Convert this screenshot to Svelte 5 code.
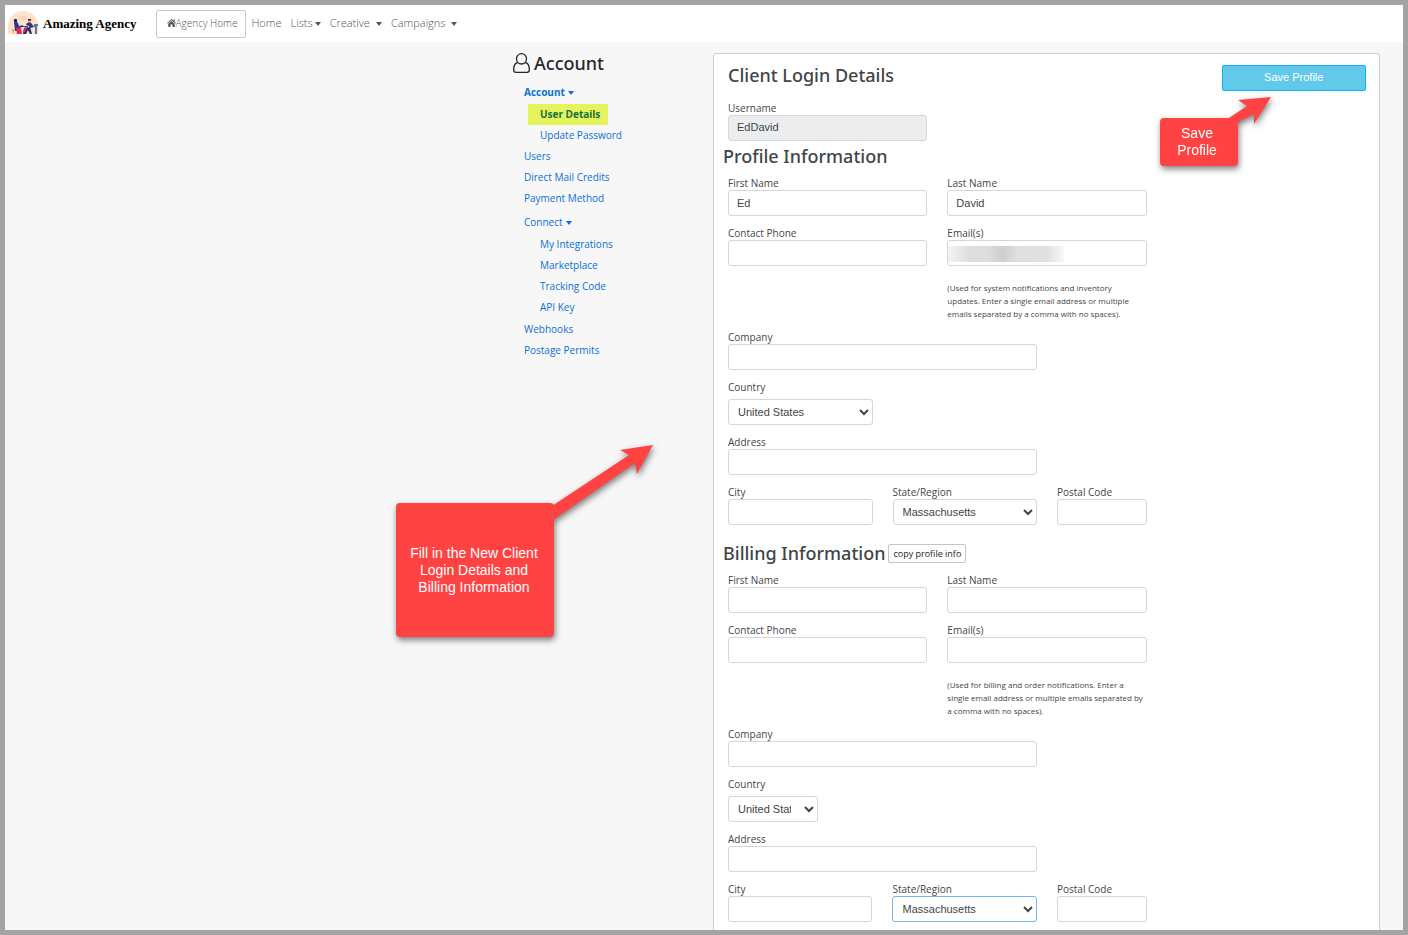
<script>
  const countries = ['United States', 'Canada'];
  const states = ['Massachusetts', 'New York', 'Vermont'];

  const sections = [
    {
      id: 'profile',
      title: 'Profile Information',
      first: 'Ed',
      last: 'David',
      hidden: true,
      note: '(Used for system notifications and inventory updates. Enter a single email address or multiple emails separated by a comma with no spaces).'
    },
    {
      id: 'billing',
      title: 'Billing Information',
      copy: true,
      first: '',
      last: '',
      narrowCountry: true,
      active: true,
      note: '(Used for billing and order notifications. Enter a single email address or multiple emails separated by a comma with no spaces).'
    }
  ];
</script>

<div class="frame">
  <header>
    <a class="brand" href="#home">
      <svg width="32" height="26" viewBox="0 0 32 26" aria-hidden="true">
        <path d="M1 23C-1 10 5 0 16 0s18 10 15 23z" fill="#fde3cb" />
        <path d="M12 5h8v4h-8zM22 8h4v3h-4z" fill="#fbd5b4" />
        <path d="M7 11l2-1 2 2 1 3 4-1v2l-4 1-1 3H8z" fill="#2b3a83" />
        <circle cx="8.500" cy="9.500" r="1.700" fill="#27205c" />
        <path d="M9 17h5l1 6h-5z" fill="#e5285d" />
        <path d="M13 15h8v1h-8z" fill="#38418e" />
        <path d="M20 12l3-1 2 2 2 3-4 1-1-2-3-1z" fill="#2c3578" />
        <circle cx="22.500" cy="10" r="1.500" fill="#efa073" />
        <path d="M21 8h3v1.500h-3z" fill="#27205c" />
        <path d="M17 17l6-1 2 7h-2l-2-4-2 4h-3z" fill="#252b68" />
        <path d="M18 16l2 1-2 4h-2z" fill="#e5285d" />
        <path d="M27 13h4v2h-1v8h-2v-7h-1z" fill="#4c78b7" />
        <path d="M5 18h2v5H6z" fill="#f2a65b" />
      </svg>
      <span>Amazing Agency</span>
    </a>
    <nav>
      <a class="agency" href="#agency">
        <svg width="9" height="8" viewBox="0 0 18 16" aria-hidden="true"><path d="M9 0l4 3.500V1h2.500v4.500L18 8l-1 1-8-6.500L1 9 0 8zM9 4l6.500 5.500V16H11v-5H7v5H2.500V9.500z" fill="currentColor" /></svg>Agency Home
      </a>
      <a href="#home">Home</a>
      <a href="#lists">Lists<i class="caret"></i></a>
      <a href="#creative">Creative <i class="caret wide"></i></a>
      <a href="#campaigns">Campaigns <i class="caret wide"></i></a>
    </nav>
  </header>

  <main>
    <aside>
      <h1>
        <svg width="17" height="20" viewBox="0 0 17 20" aria-hidden="true"><path d="M4.500 9.500C.500 10.500.700 15 .700 17c0 1.500 1 2.300 2.300 2.300h11c1.300 0 2.300-.8 2.300-2.300 0-2 .2-6.500-3.800-7.500M8.500.700a5 5 0 015 5c0 3-2.200 5.300-5 5.300s-5-2.300-5-5.300a5 5 0 015-5z" fill="none" stroke="currentColor" stroke-width="1.300" /></svg>
        Account
      </h1>
      <ul class="menu">
        <li>
          <a class="strong" href="#account">Account<i class="caret"></i></a>
          <ul>
            <li><a class="current" href="#details">User Details</a></li>
            <li><a href="#password">Update Password</a></li>
          </ul>
        </li>
        <li><a href="#users">Users</a></li>
        <li><a href="#credits">Direct Mail Credits</a></li>
        <li><a href="#payment">Payment Method</a></li>
        <li class="group">
          <a href="#connect">Connect<i class="caret"></i></a>
          <ul>
            <li><a href="#integrations">My Integrations</a></li>
            <li><a href="#marketplace">Marketplace</a></li>
            <li><a href="#tracking">Tracking Code</a></li>
            <li><a href="#api">API Key</a></li>
          </ul>
        </li>
        <li><a href="#webhooks">Webhooks</a></li>
        <li><a href="#permits">Postage Permits</a></li>
      </ul>
    </aside>

    <form class="card">
      <div class="grid top">
        <h2>Client Login Details</h2>
        <button type="button" class="save">Save Profile</button>
      </div>
      <div class="grid">
        <div class="field c4">
          <label for="username">Username</label>
          <input id="username" value="EdDavid" disabled />
        </div>
      </div>

      {#each sections as s}
        <section>
          <div class="heading">
            <h2>{s.title}</h2>
            {#if s.copy}<button type="button" class="copy">copy profile info</button>{/if}
          </div>
          <div class="grid">
            <div class="field c4">
              <label for="{s.id}-first">First Name</label>
              <input id="{s.id}-first" value={s.first} />
            </div>
            <div class="field c4">
              <label for="{s.id}-last">Last Name</label>
              <input id="{s.id}-last" value={s.last} />
            </div>
            <div class="field c4 start">
              <label for="{s.id}-phone">Contact Phone</label>
              <input id="{s.id}-phone" type="tel" />
            </div>
            <div class="field c4">
              <label for="{s.id}-email">Email(s)</label>
              <input id="{s.id}-email" class:masked={s.hidden} />
              <p>{s.note}</p>
            </div>
            <div class="field c6 start">
              <label for="{s.id}-company">Company</label>
              <input id="{s.id}-company" />
            </div>
            <div class="field country start {s.narrowCountry ? 'c2' : 'c3'}">
              <label for="{s.id}-country">Country</label>
              <select id="{s.id}-country">
                {#each countries as c}<option>{c}</option>{/each}
              </select>
            </div>
            <div class="field c6 start">
              <label for="{s.id}-address">Address</label>
              <input id="{s.id}-address" />
            </div>
            <div class="field c3 start">
              <label for="{s.id}-city">City</label>
              <input id="{s.id}-city" />
            </div>
            <div class="field c3">
              <label for="{s.id}-state">State/Region</label>
              <select id="{s.id}-state" class:active={s.active}>
                {#each states as c}<option>{c}</option>{/each}
              </select>
            </div>
            <div class="field c2">
              <label for="{s.id}-postal">Postal Code</label>
              <input id="{s.id}-postal" />
            </div>
          </div>
        </section>
      {/each}
    </form>

    <div class="callout fill">
      <svg width="110" height="90" viewBox="0 0 110 90" aria-hidden="true"><path d="M0 67L80 14 71 9 104 4 88 33 86 22 0 82z" fill="#ff4343" /></svg>
      <span>Fill in the New Client Login Details and Billing Information</span>
    </div>
    <div class="callout savetip">
      <svg width="60" height="44" viewBox="0 0 60 44" aria-hidden="true"><path d="M5 34L26 20 17 14 50 11 33 38 33 28 14 38z" fill="#ff4343" /></svg>
      <span>Save Profile</span>
    </div>
  </main>
</div>

<style>
  :global(body) {
    margin: 0;
  }
  .frame {
    box-sizing: border-box;
    min-height: 100vh;
    display: flex;
    flex-direction: column;
    border: 5px solid #a3a3a3;
    background: #f7f7f7;
    color: #3f4549;
    font: 10px/14px 'Open Sans', 'Noto Sans', sans-serif;
  }
  a {
    color: #0b70d6;
    text-decoration: none;
  }
  header {
    display: flex;
    align-items: center;
    gap: 19px;
    height: 37px;
    padding-left: 2px;
    background: #fff;
  }
  .brand {
    display: flex;
    align-items: center;
    gap: 4px;
    color: #000;
    font: bold 13px/20px 'Liberation Serif', serif;
  }
  nav {
    display: flex;
    align-items: center;
    gap: 9px;
  }
  nav a {
    display: flex;
    align-items: center;
    color: #555;
    font-size: 11px;
    font-weight: 300;
    line-height: 14px;
    padding-bottom: 2px;
  }
  nav .agency {
    box-sizing: border-box;
    height: 28px;
    margin-right: -4px;
    padding: 0 8px 2px 10px;
    border: 1px solid #c8c8c8;
    border-radius: 2px;
    font-size: 10px;
  }
  .caret {
    display: inline-block;
    margin-left: 3px;
    border: 3px solid transparent;
    border-top: 4px solid currentColor;
    border-bottom: 0;
    vertical-align: 1px;
  }
  nav .caret {
    margin: 2px 0 0 2px;
  }
  nav .wide {
    margin-left: 6px;
  }
  main {
    flex: 1;
    display: grid;
    grid-template-columns: 200px minmax(0, 667px);
    justify-content: end;
    position: relative;
    padding: 11px 23px 0 0;
  }
  h1,
  h2 {
    margin: 0;
    font-family: 'Noto Sans', 'Open Sans', sans-serif;
    font-size: 18px;
    line-height: 20px;
    font-weight: 500;
  }
  h1 {
    display: flex;
    align-items: center;
    gap: 4px;
    color: #24292d;
  }
  ul {
    margin: 0;
    padding: 0;
    list-style: none;
  }
  .menu {
    padding: 9px 0 0 11px;
  }
  .menu ul {
    padding: 1px 0 0 4px;
  }
  .menu .group ul {
    padding-bottom: 1px;
  }
  .menu ul a {
    padding: 0 8px 0 12px;
  }
  .menu a {
    display: block;
    width: max-content;
    line-height: 21px;
  }
  .group {
    margin-top: 3px;
  }
  .strong,
  .menu .current {
    font-weight: 700;
  }
  .menu .current {
    background: #e5f35c;
    color: #14733c;
  }
  .card {
    padding: 11px 13px 8px 14px;
    border: 1px solid #d0d0d0;
    border-bottom: 0;
    border-radius: 3px 3px 0 0;
    background: #fff;
  }
  .grid {
    display: grid;
    grid-template-columns: repeat(12, minmax(0, 1fr));
    gap: 10px 20px;
  }
  .top {
    margin-bottom: 10px;
  }
  .top h2 {
    grid-column: span 9;
  }
  .save {
    grid-column: span 3;
    height: 26px;
    padding: 0 0 2px;
    border: 1px solid #12b0ec;
    border-radius: 2px;
    background: #62c9ea;
    color: #fff;
    font: 11px 'Liberation Sans', sans-serif;
  }
  .heading {
    display: flex;
    align-items: center;
    gap: 3px;
    height: 30px;
    margin: 0 0 5px -5px;
  }
  section + section {
    margin-top: 13px;
  }
  .copy {
    height: 19px;
    padding: 0 4px;
    border: 1px solid #c4c4c4;
    border-radius: 2px;
    background: #fff;
    color: #212529;
    font: 9px 'Open Sans', sans-serif;
  }
  .field {
    display: flex;
    flex-direction: column;
  }
  .c2 {
    grid-column-end: span 2;
  }
  .c3 {
    grid-column-end: span 3;
  }
  .c4 {
    grid-column-end: span 4;
  }
  .c6 {
    grid-column-end: span 6;
  }
  .start {
    grid-column-start: 1;
  }
  input,
  select {
    box-sizing: border-box;
    width: 100%;
    height: 26px;
    padding: 0 8px;
    border: 1px solid #d4d6d8;
    border-radius: 3px;
    background-color: #fff;
    color: #3f4549;
    font: 11px 'Liberation Sans', sans-serif;
  }
  select {
    padding: 0 10px 0 5px;
  }
  .country label {
    margin-bottom: 5px;
  }
  input:disabled {
    padding-bottom: 2px;
    background: #ebedef;
  }
  .active {
    border-color: #74b5f5;
  }
  .masked {
    background: linear-gradient(90deg, #f4f4f4, #dedede 18%, #dcdcdc 35%, #cfcfd0 47%, #dedfe0 60%, #dfe0e1 85%, #f8f8f8) 0 5px / 116px 16px no-repeat #fff;
  }
  p {
    margin: 15px 0 0;
    padding-right: 2px;
    font-size: 8px;
    line-height: 13px;
  }
  .callout {
    position: absolute;
    box-sizing: border-box;
    display: flex;
    align-items: center;
    justify-content: center;
    border-radius: 4px;
    background: #ff4343;
    color: #fff;
    font: 14px/17px 'Liberation Sans', sans-serif;
    text-align: center;
    filter: drop-shadow(1px 3px 3px rgba(0, 0, 0, 0.5));
  }
  .callout svg {
    position: absolute;
  }
  .fill {
    top: 461px;
    right: 849px;
    width: 158px;
    height: 134px;
    padding: 0 12px 0 10px;
  }
  .fill svg {
    left: 153px;
    top: -62px;
  }
  .savetip {
    top: 76px;
    right: 165px;
    width: 78px;
    height: 48px;
    padding: 0 16px 0 12px;
  }
  .savetip svg {
    left: 61px;
    top: -32px;
  }
</style>
